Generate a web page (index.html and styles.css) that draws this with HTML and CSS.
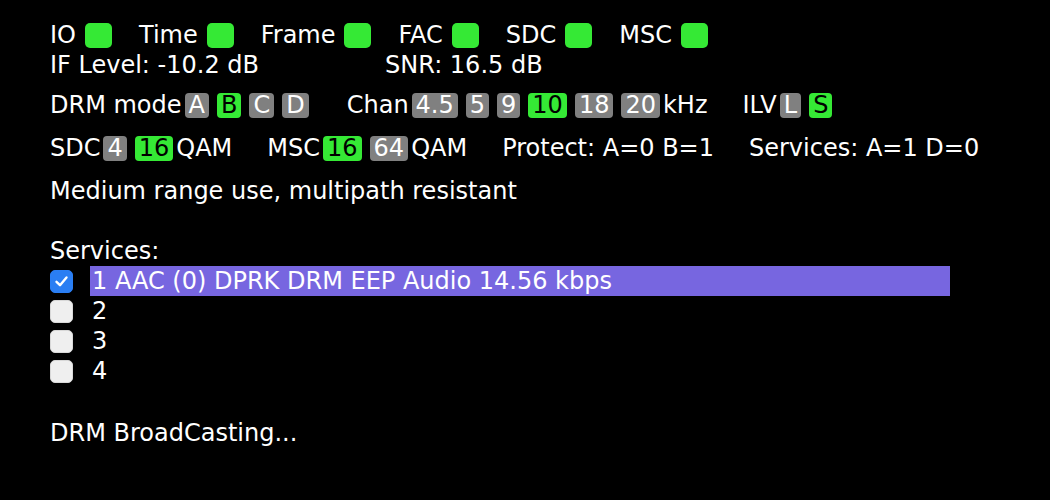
FILE: index.html
```html
<!DOCTYPE html>
<html lang="en">
  <head>
    <meta charset="UTF-8" />
    <title>DRM Status</title>
    <link rel="stylesheet" href="styles.css">
  </head>
  <body>
    <div class="panel">
      <div class="row">
        <span class="lamp-item">IO<span class="lamp on"></span></span>
        <span class="lamp-item">Time<span class="lamp on"></span></span>
        <span class="lamp-item">Frame<span class="lamp on"></span></span>
        <span class="lamp-item">FAC<span class="lamp on"></span></span>
        <span class="lamp-item">SDC<span class="lamp on"></span></span>
        <span class="lamp-item">MSC<span class="lamp on"></span></span>
      </div>
      <div class="row">
        <span class="level">IF Level: -10.2 dB</span>
        <span>SNR: 16.5 dB</span>
      </div>

      <div class="row mode-row">
        <span class="grp">DRM mode<span class="badge">A</span><span class="badge sel">B</span><span class="badge">C</span><span class="badge">D</span></span>
        <span class="grp">Chan<span class="badge">4.5</span><span class="badge">5</span><span class="badge">9</span><span class="badge sel">10</span><span class="badge">18</span><span class="badge">20</span>kHz</span>
        <span class="grp">ILV<span class="badge">L</span><span class="badge sel">S</span></span>
      </div>
      <div class="row info-row">
        <span class="grp">SDC<span class="badge">4</span><span class="badge sel">16</span>QAM</span>
        <span class="grp">MSC<span class="badge sel">16</span><span class="badge">64</span>QAM</span>
        <span class="grp">Protect: A=0 B=1</span>
        <span class="grp">Services: A=1 D=0</span>
      </div>
      <div class="row info-row">Medium range use, multipath resistant</div>

      <div class="row services-title">Services:</div>
      <ul class="services">
        <li>
          <span class="check checked">
            <svg width="15" height="15" viewBox="0 0 15 15"><path d="M2.5 7.8 L6 11.2 L12.5 3.5" fill="none" stroke="#fff" stroke-width="2.4" stroke-linecap="round" stroke-linejoin="round"/></svg>
          </span>
          <span class="svc active">1 AAC (0) DPRK DRM EEP Audio 14.56 kbps</span>
        </li>
        <li><span class="check"></span><span class="svc">2</span></li>
        <li><span class="check"></span><span class="svc">3</span></li>
        <li><span class="check"></span><span class="svc">4</span></li>
      </ul>

      <div class="row status">DRM BroadCasting...</div>
    </div>
  </body>
</html>
```

FILE: styles.css
```css
/* DRM receiver status panel */
body { margin: 0; background: #000; color: #fff; font-family: "DejaVu Sans", Verdana, sans-serif; font-size: 24px; }
.panel { padding: 20px 0 0 50px; }
.row { display: flex; align-items: center; height: 30px; line-height: 30px; white-space: nowrap; }

/* lock lamps */
.lamp-item { display: flex; align-items: center; margin-right: 27px; }
.lamp { display: inline-block; width: 27px; height: 25px; margin-left: 9px; border-radius: 5px; background: #808080; }
.lamp.on { background: #35e935; }

.level { width: 335px; }

/* option badges */
.mode-row { margin-top: 10px; }
.info-row { margin-top: 13px; }
.grp { display: flex; align-items: center; margin-right: 35px; }
.badge { display: inline-block; height: 25px; line-height: 25px; padding: 0 4px; margin: 0 3px; border-radius: 4px; background: #808080; color: #fff; }
.badge + .badge { margin-left: 5px; }
.badge.sel { background: #35e935; color: #000; }

/* services list */
.services-title { margin-top: 30px; }
.services { list-style: none; margin: 0; padding: 0; }
.services li { display: flex; align-items: center; height: 30px; line-height: 30px; }
.check { display: flex; align-items: center; justify-content: center; box-sizing: border-box; width: 23px; height: 23px; border-radius: 5px; background: #efefef; border: 1px solid #d8d8d8; }
.check.checked { background: #2a7ef3; border-color: #2a7ef3; }
.svc { margin-left: 17px; padding-left: 2px; }
.svc.active { width: 858px; background: #7766e0; }

.status { margin-top: 32px; }
```
